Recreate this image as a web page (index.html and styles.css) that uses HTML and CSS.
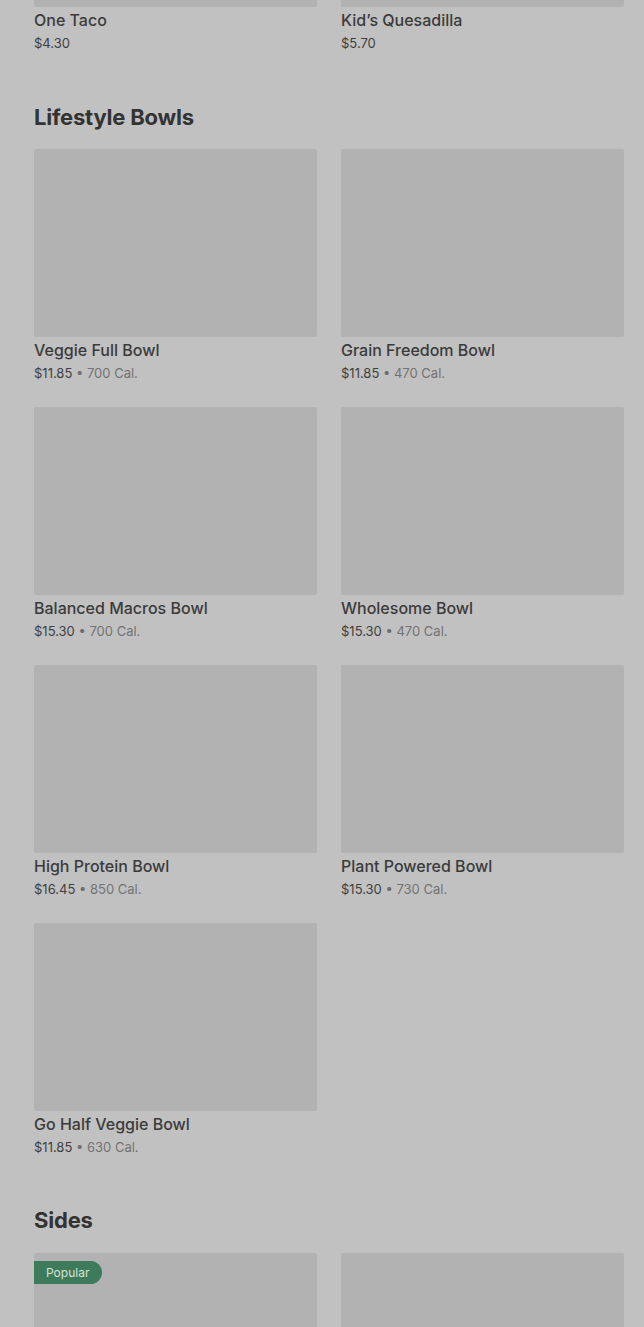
FILE: index.html
```html
<!DOCTYPE html>
<html>
<head>
<meta charset="utf-8">
<link rel="stylesheet" href="styles.css">
</head>
<body>
<main class="menu">
  <section class="section section--lead">
    <div class="grid">
      <div class="card"><div class="thumb"></div><div class="name">One Taco</div><div class="meta"><span class="price">$4.30</span></div></div>
      <div class="card"><div class="thumb"></div><div class="name">Kid’s Quesadilla</div><div class="meta"><span class="price">$5.70</span></div></div>
    </div>
  </section>
  <section class="section">
    <h2 class="title">Lifestyle Bowls</h2>
    <div class="grid">
      <div class="card"><div class="thumb"></div><div class="name">Veggie Full Bowl</div><div class="meta"><span class="price">$11.85</span> • <span class="cal">700 Cal.</span></div></div>
      <div class="card"><div class="thumb"></div><div class="name">Grain Freedom Bowl</div><div class="meta"><span class="price">$11.85</span> • <span class="cal">470 Cal.</span></div></div>
      <div class="card"><div class="thumb"></div><div class="name">Balanced Macros Bowl</div><div class="meta"><span class="price">$15.30</span> • <span class="cal">700 Cal.</span></div></div>
      <div class="card"><div class="thumb"></div><div class="name">Wholesome Bowl</div><div class="meta"><span class="price">$15.30</span> • <span class="cal">470 Cal.</span></div></div>
      <div class="card"><div class="thumb"></div><div class="name">High Protein Bowl</div><div class="meta"><span class="price">$16.45</span> • <span class="cal">850 Cal.</span></div></div>
      <div class="card"><div class="thumb"></div><div class="name">Plant Powered Bowl</div><div class="meta"><span class="price">$15.30</span> • <span class="cal">730 Cal.</span></div></div>
      <div class="card"><div class="thumb"></div><div class="name">Go Half Veggie Bowl</div><div class="meta"><span class="price">$11.85</span> • <span class="cal">630 Cal.</span></div></div>
    </div>
  </section>
  <section class="section">
    <h2 class="title title--sides">Sides</h2>
    <div class="grid">
      <div class="card"><div class="thumb"><span class="badge">Popular</span></div></div>
      <div class="card"><div class="thumb"></div></div>
    </div>
  </section>
</main>
</body>
</html>
```
FILE: styles.css
```css
* { box-sizing: border-box; }
html, body { margin: 0; padding: 0; }
body {
  background: #c1c1c1;
  font-family: Inter, Roboto, "Liberation Sans", sans-serif;
  color: #3a3a3a;
  overflow: hidden;
  height: 1327px;
}
.menu {
  padding: 0 20px 0 34px;
  margin-top: -181px;
}
.section { padding-bottom: 50px; }
.section--lead { padding-bottom: 51px; }
.title {
  margin: 0;
  font-family: Inter, "Liberation Sans", sans-serif;
  font-weight: 700;
  font-size: 22px;
  letter-spacing: -0.2px;
  line-height: 28px;
  color: #333;
  padding-bottom: 18px;
}
.title--sides { padding-bottom: 19px; }
.grid {
  display: grid;
  grid-template-columns: 283px 283px;
  column-gap: 24px;
  row-gap: 25px;
}
.thumb {
  position: relative;
  height: 188px;
  background: #b2b2b2;
  border-radius: 2px;
}
.name {
  margin-top: 3px;
  font-size: 16px;
  line-height: 20px;
  font-weight: 500;
  color: #3b3b3b;
}
.meta {
  margin-top: 4px;
  font-size: 13px;
  line-height: 18px;
  color: #6e6e6e;
}
.price { color: #3f3f3f; }
.cal { color: #737373; }
.badge {
  position: absolute;
  left: 0;
  top: 8px;
  height: 23px;
  padding: 0 13px 0 12px;
  display: flex;
  align-items: center;
  background: #3e7b5b;
  color: #d3e4d8;
  font-size: 12px;
  border-radius: 0 12px 12px 0;
}
```
